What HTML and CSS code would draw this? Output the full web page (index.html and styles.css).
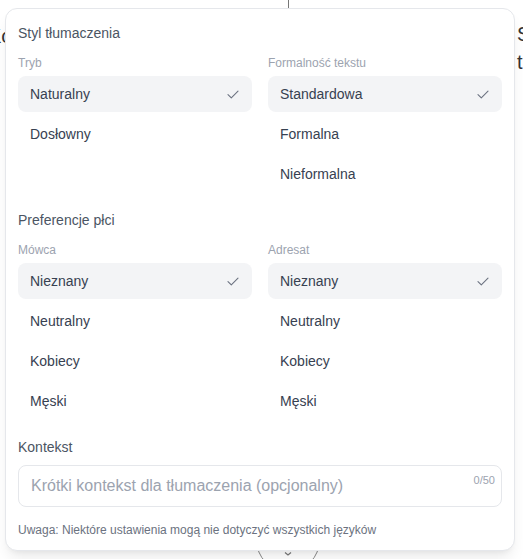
FILE: index.html
```html
<!DOCTYPE html>
<html lang="pl">
<head>
<meta charset="utf-8">
<title>Styl tłumaczenia</title>
<link rel="stylesheet" href="styles.css">
</head>
<body>
<div class="stage">
  <div class="pane pane-left"><p class="pane-text left-text">Ko</p></div>
  <div class="pane pane-right"><p class="pane-text right-text">S<br>t</p></div>
  <div class="swap"><svg width="10" height="6" viewBox="0 0 10 6"><path d="M2 1.5 L5 4 L8 1.5" fill="none" stroke="#777" stroke-width="1.2"/></svg></div>

  <div class="popover">
    <section class="section">
      <h3 class="heading">Styl tłumaczenia</h3>
      <div class="cols">
        <div class="col">
          <div class="label">Tryb</div>
          <div class="options">
            <div class="option selected"><span>Naturalny</span><svg class="check" width="14" height="14" viewBox="0 0 14 14"><path d="M2 7.6 L5.3 10.8 L12 4.2" fill="none" stroke="#6b7280" stroke-width="1.1" stroke-linecap="round" stroke-linejoin="round"/></svg></div>
            <div class="option"><span>Dosłowny</span></div>
          </div>
        </div>
        <div class="col">
          <div class="label">Formalność tekstu</div>
          <div class="options">
            <div class="option selected"><span>Standardowa</span><svg class="check" width="14" height="14" viewBox="0 0 14 14"><path d="M2 7.6 L5.3 10.8 L12 4.2" fill="none" stroke="#6b7280" stroke-width="1.1" stroke-linecap="round" stroke-linejoin="round"/></svg></div>
            <div class="option"><span>Formalna</span></div>
            <div class="option"><span>Nieformalna</span></div>
          </div>
        </div>
      </div>
    </section>

    <section class="section">
      <h3 class="heading">Preferencje płci</h3>
      <div class="cols">
        <div class="col">
          <div class="label">Mówca</div>
          <div class="options">
            <div class="option selected"><span>Nieznany</span><svg class="check" width="14" height="14" viewBox="0 0 14 14"><path d="M2 7.6 L5.3 10.8 L12 4.2" fill="none" stroke="#6b7280" stroke-width="1.1" stroke-linecap="round" stroke-linejoin="round"/></svg></div>
            <div class="option"><span>Neutralny</span></div>
            <div class="option"><span>Kobiecy</span></div>
            <div class="option"><span>Męski</span></div>
          </div>
        </div>
        <div class="col">
          <div class="label">Adresat</div>
          <div class="options">
            <div class="option selected"><span>Nieznany</span><svg class="check" width="14" height="14" viewBox="0 0 14 14"><path d="M2 7.6 L5.3 10.8 L12 4.2" fill="none" stroke="#6b7280" stroke-width="1.1" stroke-linecap="round" stroke-linejoin="round"/></svg></div>
            <div class="option"><span>Neutralny</span></div>
            <div class="option"><span>Kobiecy</span></div>
            <div class="option"><span>Męski</span></div>
          </div>
        </div>
      </div>
    </section>

    <section class="section">
      <h3 class="heading heading-ctx">Kontekst</h3>
      <div class="field">
        <input class="input" type="text" placeholder="Krótki kontekst dla tłumaczenia (opcjonalny)">
        <span class="counter">0/50</span>
      </div>
      <p class="note">Uwaga: Niektóre ustawienia mogą nie dotyczyć wszystkich języków</p>
    </section>
  </div>
</div>
</body>
</html>
```

FILE: styles.css
```css
* { box-sizing: border-box; }
html, body {
  margin: 0;
  padding: 0;
  background: #ffffff;
  font-family: "Liberation Sans", Arial, sans-serif;
}
.stage {
  position: relative;
  width: 523px;
  height: 559px;
  overflow: hidden;
  display: flex;
}
.pane {
  height: 100%;
}
.pane-left {
  width: 289px;
  border-right: 1px solid #777;
  overflow: hidden;
}
.pane-right {
  flex: 1;
  overflow: hidden;
}
.pane-text {
  margin: 0;
  font-size: 20px;
  line-height: 28px;
  color: #333;
}
.left-text {
  padding-top: 22px;
  margin-left: -12px;
}
.right-text {
  padding-top: 20px;
  padding-left: 228px;
}
.swap {
  position: absolute;
  left: 256px;
  top: 508px;
  width: 64px;
  height: 64px;
  border-radius: 50%;
  border: 1px solid #888;
  background: #fff;
  display: flex;
  justify-content: center;
  padding-top: 42px;
}
.popover {
  position: absolute;
  left: 5px;
  top: 8px;
  width: 510px;
  background: #fff;
  border: 1px solid #e5e7eb;
  border-radius: 12px;
  box-shadow: 0 10px 15px -3px rgba(0,0,0,0.08), 0 4px 6px -4px rgba(0,0,0,0.08);
  padding: 14px 12px 12px;
  z-index: 2;
}
.section + .section {
  margin-top: 18px;
}
.heading {
  margin: 0 0 12px;
  font-size: 14px;
  line-height: 20px;
  font-weight: 400;
  color: #4b5563;
}
.heading-ctx {
  margin-bottom: 8px;
}
.cols {
  display: grid;
  grid-template-columns: 1fr 1fr;
  column-gap: 16px;
}
.label {
  font-size: 12px;
  line-height: 16px;
  color: #9ca3af;
  margin-bottom: 5px;
}
.options {
  display: flex;
  flex-direction: column;
  gap: 4px;
}
.option {
  height: 36px;
  padding: 0 12px;
  border-radius: 8px;
  display: flex;
  align-items: center;
  justify-content: space-between;
  font-size: 14px;
  line-height: 20px;
  color: #374151;
}
.option.selected {
  background: #f3f4f6;
}
.check {
  display: block;
}
.field {
  position: relative;
  margin-bottom: 15px;
}
.input {
  display: block;
  width: 100%;
  height: 42px;
  border: 1px solid #e5e7eb;
  border-radius: 8px;
  padding: 8px 48px 8px 12px;
  font-family: "Liberation Sans", Arial, sans-serif;
  font-size: 16px;
  line-height: 24px;
  color: #374151;
  background: #fff;
  outline: none;
}
.input::placeholder {
  color: #9ca3af;
}
.counter {
  position: absolute;
  right: 7px;
  top: 9px;
  font-size: 11px;
  line-height: 13px;
  color: #9ca3af;
}
.note {
  margin: 0;
  font-size: 12px;
  line-height: 16px;
  color: #6b7280;
}
```
